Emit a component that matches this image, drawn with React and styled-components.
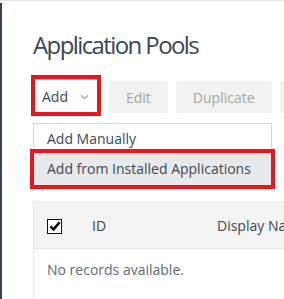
import React from 'react';
import styled, { createGlobalStyle } from 'styled-components';

const GlobalStyle = createGlobalStyle`
  html, body {
    margin: 0;
    background: #ffffff;
    overflow: hidden;
  }
  body {
    font-family: 'Open Sans', 'DejaVu Sans', sans-serif;
  }
`;

export default function App() {
  return (
    <>
      <GlobalStyle />
      <Page>
        <Rail />
        <Main>
          <Title>Application Pools</Title>
          <Toolbar>
            <Highlight>
              <AddButton>
                Add
                <Chevron width="9" height="6" viewBox="0 0 9 6">
                  <path d="M1 1.2 L4.5 4.5 L8 1.2" fill="none" stroke="#a9b1ba" strokeWidth="1.3" />
                </Chevron>
              </AddButton>
            </Highlight>
            <Button>Edit</Button>
            <Button>Duplicate</Button>
            <Button>Delete</Button>
          </Toolbar>
          <Menu>
            <MenuItem>Add Manually</MenuItem>
            <MenuItem $active>Add from Installed Applications</MenuItem>
          </Menu>
          <Table>
            <HeaderRow>
              <Cell>
                <CheckBox>
                  <svg width="12" height="12" viewBox="0 0 12 12">
                    <path d="M1.5 6.3 L4.6 9.3 L10.6 2.2" fill="none" stroke="#000" strokeWidth="2.5" />
                  </svg>
                </CheckBox>
              </Cell>
              <Cell>ID</Cell>
              <Cell>Display Name</Cell>
            </HeaderRow>
            <EmptyRow>No records available.</EmptyRow>
          </Table>
        </Main>
      </Page>
    </>
  );
}

const Page = styled.div`
  display: flex;
  min-height: 299px;
  border-top: 1px solid #e6e6e6;
`;

const Rail = styled.div`
  width: 2px;
  flex: none;
  margin-top: 2px;
  background: #3b4550;
`;

const Main = styled.div`
  flex: 1;
  min-width: 0;
  padding-left: 29px;
`;

const Title = styled.h1`
  margin: 27px 0 13px 2px;
  font-size: 24px;
  font-weight: 400;
  letter-spacing: -1.6px;
  line-height: 34px;
  color: #3d4752;
  white-space: nowrap;
`;

const Toolbar = styled.div`
  display: flex;
  align-items: flex-end;
  gap: 8px;
  white-space: nowrap;
`;

const Highlight = styled.div`
  display: flex;
  border: 4px solid #e9161e;
`;

const AddButton = styled.div`
  display: flex;
  align-items: center;
  box-sizing: border-box;
  height: 33px;
  padding: 0 8px 0 7px;
  background: #ffffff;
  border-top: 1px solid #93c9ee;
  font-size: 14px;
  color: #3d4752;
`;

const Chevron = styled.svg`
  margin-left: 12px;
  margin-top: 2px;
`;

const Button = styled.div`
  display: flex;
  align-items: center;
  flex: none;
  height: 32px;
  margin-bottom: 3px;
  padding: 0 17px;
  background: #f2f2f2;
  border-radius: 2px;
  font-size: 14px;
  color: #a4a4a4;
`;

const Menu = styled.div`
  width: 237px;
  margin: 7px 0 0 2px;
  border: 1px solid #d7d7d7;
  background: #ffffff;
`;

const MenuItem = styled.div`
  height: ${p => (p.$active ? '32px' : '29px')};
  line-height: ${p => (p.$active ? '32px' : '29px')};
  padding-left: 13px;
  font-size: 14px;
  color: #3d4752;
  white-space: nowrap;
  background: ${p => (p.$active ? '#e8e9eb' : '#ffffff')};
  outline: ${p => (p.$active ? '4px solid #e9161e' : 'none')};
`;

const Table = styled.div`
  width: 420px;
  min-height: 98px;
  margin: 15px 0 0 2px;
  border-left: 1px solid #e6e6e6;
  border-top: 1px solid #ececec;
`;

const HeaderRow = styled.div`
  display: grid;
  grid-template-columns: 58px 125px 1fr;
  height: 46px;
  align-items: center;
  background: #f3f3f3;
  border-bottom: 1px solid #e8e8e8;
  font-size: 14px;
  color: #3d4752;
`;

const Cell = styled.div`
  display: flex;
  align-items: center;
  white-space: nowrap;
  &:first-child {
    padding-left: 13px;
  }
`;

const CheckBox = styled.span`
  display: flex;
  align-items: center;
  justify-content: center;
  box-sizing: border-box;
  width: 15px;
  height: 15px;
  margin-top: 2px;
  border: 1.5px solid #111111;
  background: #ffffff;
`;

const EmptyRow = styled.div`
  padding: 11px 13px;
  font-size: 14px;
  line-height: 19px;
  color: #606a73;
`;
